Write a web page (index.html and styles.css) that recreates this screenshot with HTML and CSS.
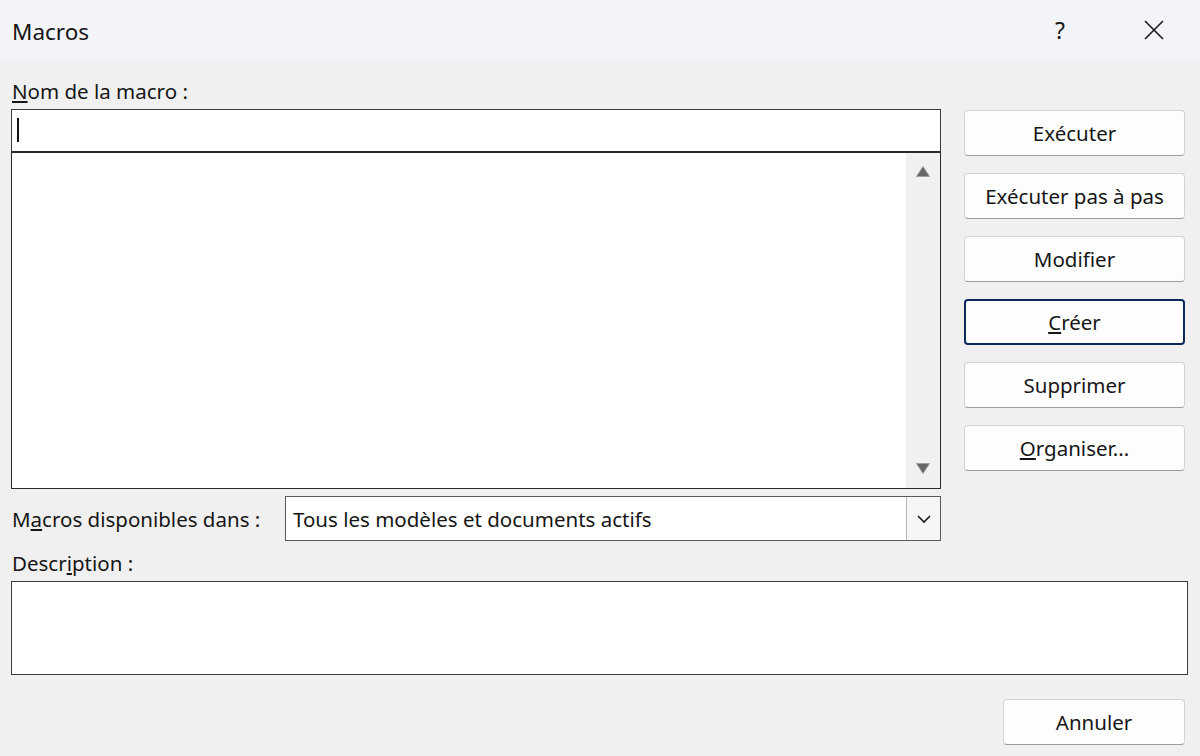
FILE: index.html
```html
<!DOCTYPE html>
<html lang="fr">
<head>
<meta charset="utf-8">
<title>Macros</title>
<link rel="stylesheet" href="styles.css">
</head>
<body>
<div class="dialog">
  <header class="titlebar">
    <span class="title">Macros</span>
    <div class="title-actions">
      <span class="help">?</span>
      <svg class="close" width="22" height="22" viewBox="0 0 22 22"><path d="M2 2 L20 20 M20 2 L2 20" stroke="#1a1a1a" stroke-width="1.6" fill="none"/></svg>
    </div>
  </header>
  <main class="content">
    <div class="top">
      <div class="left">
        <div class="label"><u>N</u>om de la macro :</div>
        <div class="name-input"><span class="caret"></span></div>
        <div class="listbox">
          <div class="list-area"></div>
          <div class="scrollbar">
            <svg width="16" height="13" viewBox="0 0 16 13"><path d="M8 1.5 L14.5 11.5 L1.5 11.5 Z" fill="#666" stroke="#a0a0a0" stroke-width="1" stroke-linejoin="round"/></svg>
            <svg width="16" height="13" viewBox="0 0 16 13"><path d="M1.5 1.5 L14.5 1.5 L8 11.5 Z" fill="#666" stroke="#a0a0a0" stroke-width="1" stroke-linejoin="round"/></svg>
          </div>
        </div>
        <div class="avail-row">
          <span class="label-inline">M<u>a</u>cros disponibles dans :</span>
          <div class="combo">
            <span class="combo-text">Tous les modèles et documents actifs</span>
            <span class="combo-btn"><svg width="16" height="10" viewBox="0 0 16 10"><path d="M2 2 L8 8 L14 2" stroke="#1a1a1a" stroke-width="1.6" fill="none"/></svg></span>
          </div>
        </div>
      </div>
      <div class="buttons">
        <button class="btn">Exécuter</button>
        <button class="btn">Exécuter pas à pas</button>
        <button class="btn">Modifier</button>
        <button class="btn btn-default"><u>C</u>réer</button>
        <button class="btn">Supprimer</button>
        <button class="btn"><u>O</u>rganiser...</button>
      </div>
    </div>
    <div class="desc-label">Descr<u>i</u>ption :</div>
    <div class="desc-box"></div>
    <div class="footer">
      <button class="btn btn-cancel">Annuler</button>
    </div>
  </main>
</div>
</body>
</html>
```

FILE: styles.css
```css
* { box-sizing: border-box; }
html, body { margin: 0; padding: 0; }
body {
  width: 1200px;
  height: 756px;
  background: #f0f0f0;
  font-family: "Noto Sans", "Open Sans", sans-serif;
  color: #161616;
  overflow: hidden;
}
.dialog { width: 1200px; height: 756px; display: flex; flex-direction: column; }
.titlebar {
  height: 60px;
  background: #f3f4f7;
  display: flex;
  align-items: center;
  justify-content: space-between;
  padding: 0 0 0 12px;
}
.title { font-size: 22.5px; padding-top: 2px; }
.title-actions { display: flex; align-items: center; }
.help { font-size: 23px; width: 40px; text-align: center; margin-right: 63px; }
.close { margin-right: 35px; }
.content { flex: 1; padding: 17px 13px 0 11px; display: flex; flex-direction: column; }
.top { display: flex; gap: 23px; }
.left { width: 930px; display: flex; flex-direction: column; }
.label { font-size: 20.5px; line-height: 28px; padding-left: 1px; margin-bottom: 4px; }
.name-input {
  height: 42px;
  background: #fff;
  border: 1px solid #3c3c3c;
  border-bottom: none;
  padding: 8px 0 0 5px;
}
.caret { display: block; width: 2px; height: 24px; background: #111; }
.listbox {
  height: 338px;
  background: #fff;
  border: 1px solid #2a2a2a;
  border-top-width: 2px;
  display: flex;
}
.list-area { flex: 1; }
.scrollbar {
  width: 34px;
  background: #f0f0f0;
  display: flex;
  flex-direction: column;
  justify-content: space-between;
  align-items: center;
  padding: 12px 0 13px;
}
.avail-row { display: flex; align-items: center; margin-top: 7px; height: 45px; }
.label-inline { font-size: 20.5px; width: 274px; padding-left: 1px; }
.combo {
  flex: 1;
  height: 45px;
  background: #fff;
  border: 1px solid #5a5a5a;
  display: flex;
  align-items: stretch;
}
.combo-text { flex: 1; font-size: 20.5px; padding: 0 7px; display: flex; align-items: center; }
.combo-btn {
  width: 34px;
  background: #f6f6f6;
  border-left: 1px solid #b5b5b5;
  display: flex;
  align-items: center;
  justify-content: center;
}
.buttons { width: 221px; display: flex; flex-direction: column; gap: 17px; padding-top: 33px; }
.btn {
  font-family: inherit;
  font-size: 20.5px;
  color: #161616;
  height: 46px;
  background: #fdfdfd;
  border: 1px solid #d3d3d3;
  border-bottom: 1px solid #9c9c9c;
  border-radius: 4px;
  padding: 0;
}
.btn-default { border: 2px solid #0b2a5c; }
.desc-label { font-size: 20.5px; line-height: 28px; margin-top: 8px; padding-left: 1px; }
.desc-box {
  height: 94px;
  width: 1177px;
  background: #fff;
  border: 1.5px solid #3c3c3c;
  margin-top: 4px;
}
.footer { display: flex; justify-content: flex-end; margin-top: 24px; padding-right: 2px; }
.btn-cancel { width: 182px; }
```
